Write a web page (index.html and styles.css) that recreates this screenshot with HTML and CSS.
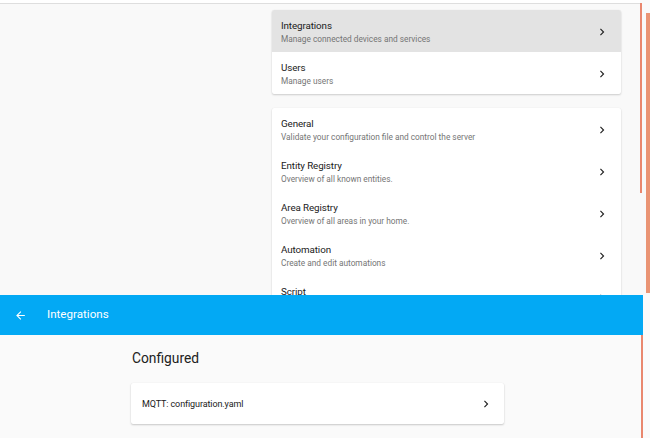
FILE: index.html
```html
<!DOCTYPE html>
<html>
<head>
<meta charset="utf-8">
<link rel="stylesheet" href="styles.css">
</head>
<body>
<div class="page">
  <div class="upper">
    <div class="topstrip"></div>
    <div class="cards">
      <div class="card">
        <div class="row active">
          <div class="texts"><div class="title">Integrations</div><div class="sub">Manage connected devices and services</div></div>
          <svg class="chev" viewBox="0 0 24 24"><path d="M8.6 16.6L13.2 12 8.6 7.4 10 6l6 6-6 6z"/></svg>
        </div>
        <div class="row">
          <div class="texts"><div class="title">Users</div><div class="sub">Manage users</div></div>
          <svg class="chev" viewBox="0 0 24 24"><path d="M8.6 16.6L13.2 12 8.6 7.4 10 6l6 6-6 6z"/></svg>
        </div>
      </div>
      <div class="card">
        <div class="row">
          <div class="texts"><div class="title">General</div><div class="sub">Validate your configuration file and control the server</div></div>
          <svg class="chev" viewBox="0 0 24 24"><path d="M8.6 16.6L13.2 12 8.6 7.4 10 6l6 6-6 6z"/></svg>
        </div>
        <div class="row">
          <div class="texts"><div class="title">Entity Registry</div><div class="sub">Overview of all known entities.</div></div>
          <svg class="chev" viewBox="0 0 24 24"><path d="M8.6 16.6L13.2 12 8.6 7.4 10 6l6 6-6 6z"/></svg>
        </div>
        <div class="row">
          <div class="texts"><div class="title">Area Registry</div><div class="sub">Overview of all areas in your home.</div></div>
          <svg class="chev" viewBox="0 0 24 24"><path d="M8.6 16.6L13.2 12 8.6 7.4 10 6l6 6-6 6z"/></svg>
        </div>
        <div class="row">
          <div class="texts"><div class="title">Automation</div><div class="sub">Create and edit automations</div></div>
          <svg class="chev" viewBox="0 0 24 24"><path d="M8.6 16.6L13.2 12 8.6 7.4 10 6l6 6-6 6z"/></svg>
        </div>
        <div class="row">
          <div class="texts"><div class="title">Script</div><div class="sub">Create and edit scripts</div></div>
          <svg class="chev" viewBox="0 0 24 24"><path d="M8.6 16.6L13.2 12 8.6 7.4 10 6l6 6-6 6z"/></svg>
        </div>
      </div>
    </div>
    <div class="scroll-thin"></div>
    <div class="scroll-wide"></div>
  </div>
  <div class="toolbar">
    <svg class="back" viewBox="0 0 24 24"><path d="M20 11H7.83l5.59-5.59L12 4l-8 8 8 8 1.41-1.41L7.83 13H20v-2z"/></svg>
    <span class="tb-title">Integrations</span>
  </div>
  <div class="lower">
    <div class="content">
      <h2 class="heading">Configured</h2>
      <div class="card single">
        <div class="row slim">
          <div class="title mqtt">MQTT: configuration.yaml</div>
          <svg class="chev" viewBox="0 0 24 24"><path d="M8.6 16.6L13.2 12 8.6 7.4 10 6l6 6-6 6z"/></svg>
        </div>
      </div>
    </div>
    <div class="scroll-line"></div>
  </div>
</div>
</body>
</html>
```
FILE: styles.css
```css
* { box-sizing: border-box; }
html, body { margin: 0; padding: 0; }
body {
  width: 650px;
  height: 438px;
  overflow: hidden;
  background: #fafafa;
  font-family: Roboto, "Noto Sans", sans-serif;
  color: #212121;
}
.page { display: flex; flex-direction: column; height: 438px; }
.upper {
  position: relative;
  height: 295px;
  overflow: hidden;
  background: #f9f9f9;
}
.topstrip {
  height: 4px;
  width: 640px;
  background: #ffffff;
  border-bottom: 1px solid #dedede;
}
.cards {
  margin-left: 272px;
  width: 349px;
  padding-top: 6px;
  display: flex;
  flex-direction: column;
  gap: 14px;
}
.card {
  background: #fff;
  border-radius: 2px;
  box-shadow: 0 1px 2px rgba(0,0,0,0.18), 0 0 1px rgba(0,0,0,0.08);
  overflow: hidden;
}
.row {
  height: 42px;
  display: flex;
  align-items: center;
  justify-content: space-between;
  padding: 2px 12px 0 9px;
}
.row.active { background: #e3e3e3; }
.texts { display: flex; flex-direction: column; gap: 2px; }
.title { font-size: 9.8px; line-height: 12px; color: #212121; letter-spacing: -0.1px; }
.sub { font-size: 8.3px; line-height: 11px; color: #757575; }
.chev { width: 14px; height: 14px; fill: #222; }
.scroll-thin {
  position: absolute;
  left: 640px;
  top: 3px;
  width: 2px;
  height: 190px;
  background: #e9876e;
}
.scroll-wide {
  position: absolute;
  left: 646px;
  top: 13px;
  width: 4px;
  height: 280px;
  background: #ea9474;
}
.toolbar {
  height: 40px;
  width: 643px;
  background: #03a9f4;
  display: flex;
  align-items: center;
  color: #fff;
}
.back { width: 13px; height: 13px; fill: #fff; margin-left: 14px; }
.tb-title { margin-left: 20px; font-size: 11.6px; padding-bottom: 2px; }
.lower { position: relative; flex: 1; background: #fafafa; }
.content {
  margin-left: 131px;
  width: 373px;
  padding-top: 14px;
}
.heading {
  margin: 0 0 16px 1px;
  font-size: 13.8px;
  font-weight: 400;
  color: #212121;
  line-height: 18px;
}
.single { box-shadow: 0 1px 2px rgba(0,0,0,0.2), 0 0 1px rgba(0,0,0,0.08); }
.row.slim { height: 41px; padding: 0 11px; }
.title.mqtt { font-size: 9px; letter-spacing: -0.1px; }
.scroll-line {
  position: absolute;
  left: 641px;
  top: 0;
  width: 2px;
  height: 103px;
  background: #e9876e;
}
```
